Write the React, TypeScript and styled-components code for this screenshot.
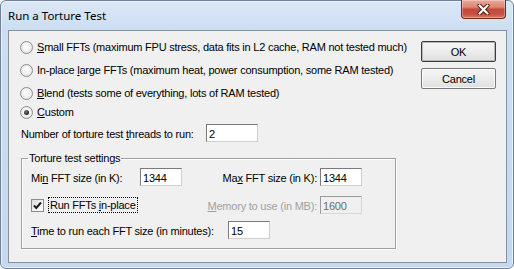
import React from "react";
import styled, { createGlobalStyle } from "styled-components";

const GlobalStyle = createGlobalStyle`
  html, body { margin: 0; padding: 0; }
  body { width: 514px; height: 269px; overflow: hidden; background: #ffffff; }
  * { box-sizing: border-box; }
`;

const UI_FONT = `"Liberation Sans", Arial, sans-serif`;

const Window = styled.div`
  width: 514px;
  height: 269px;
  display: flex;
  flex-direction: column;
  border: 1px solid #6f819a;
  border-radius: 6px;
  padding: 0 6px 5px 7px;
  background: linear-gradient(to bottom, #dbe7f5 0px, #cddef2 29px, #c4d8ef 100%);
  box-shadow: inset 0 0 0 1px #e9f1fb;
  font-family: ${UI_FONT};
  font-size: 11px;
  letter-spacing: -0.22px;
  line-height: 14px;
  color: #000;
`;

const TitleBar = styled.div`
  height: 29px;
  flex-shrink: 0;
  display: flex;
  align-items: flex-start;
  justify-content: space-between;
`;

const Title = styled.div`
  font-family: "Noto Sans", "Open Sans", sans-serif;
  font-size: 11.5px;
  letter-spacing: 0;
  line-height: 14px;
  padding-top: 8px;
  color: #000;
`;

const CloseButton = styled.div`
  width: 45px;
  height: 19px;
  margin-top: -1px;
  margin-right: 1px;
  display: flex;
  align-items: center;
  justify-content: center;
  border: 1px solid #6e2a1f;
  border-top: none;
  border-radius: 0 0 4px 4px;
  background: linear-gradient(
    to bottom,
    #e9a99a 0%,
    #d98773 40%,
    #c4493a 52%,
    #c65040 78%,
    #d97a62 100%
  );
  box-shadow: inset 0 0 0 1px rgba(255, 255, 255, 0.3);
`;

const Client = styled.div`
  flex: 1;
  display: flex;
  background: #f0f0f0;
  border: 1px solid #8591a3;
`;

const Options = styled.div`
  flex: 1;
  display: flex;
  flex-direction: column;
  padding: 7px 0 0 12px;
`;

const RadioRow = styled.div<{ $gap: number }>`
  height: 18px;
  margin-top: ${(p) => p.$gap}px;
  display: flex;
  align-items: center;
  white-space: nowrap;
`;

const RadioMark = styled.span<{ $checked?: boolean }>`
  width: 13px;
  height: 13px;
  margin-left: -1px;
  margin-right: 4px;
  flex-shrink: 0;
  border-radius: 50%;
  border: 1px solid #8b8c8c;
  background: radial-gradient(circle at 50% 45%, #ffffff 0%, #f3f3f3 45%, #d4d4d4 100%);
  display: flex;
  align-items: center;
  justify-content: center;
  &::after {
    content: "";
    width: 5px;
    height: 5px;
    border-radius: 50%;
    background: ${(p) =>
      p.$checked ? "radial-gradient(circle at 40% 35%, #7a7a7a 0%, #141414 80%)" : "transparent"};
  }
`;

const Key = styled.span`
  text-decoration: underline;
  text-underline-offset: 1px;
`;

const FieldRow = styled.div<{ $gap: number }>`
  height: 18px;
  margin-top: ${(p) => p.$gap}px;
  display: flex;
  align-items: center;
  white-space: nowrap;
`;

const Label = styled.span<{ $w: number; $right?: boolean; $disabled?: boolean }>`
  width: ${(p) => p.$w}px;
  flex-shrink: 0;
  padding-top: 2px;
  padding-right: ${(p) => (p.$right ? 3 : 0)}px;
  text-align: ${(p) => (p.$right ? "right" : "left")};
  color: ${(p) => (p.$disabled ? "#a0a0a0" : "#000")};
`;

const Field = styled.input<{ $w: number }>`
  width: ${(p) => p.$w}px;
  height: 18px;
  flex-shrink: 0;
  margin: 0;
  padding: 1px 2px 0;
  font: inherit;
  letter-spacing: inherit;
  color: #000;
  background: #ffffff;
  border: 1px solid;
  border-color: #7a7a7a #cfcfcf #cfcfcf #7a7a7a;
  outline: none;
  &:disabled {
    background: #f0f0f0;
    color: #6d6d6d;
    border-color: #9a9a9a #d6d6d6 #d6d6d6 #9a9a9a;
  }
`;

const Group = styled.fieldset`
  width: 375px;
  height: 98px;
  margin: 9px 0 0 0;
  padding: 0 9px;
  border: 1px solid #a0a0a0;
  box-shadow: inset 1px 1px 0 #ffffff, 1px 1px 0 #ffffff;
  display: flex;
  flex-direction: column;
`;

const GroupTitle = styled.legend`
  margin-left: -3px;
  padding: 0 1px;
  line-height: 15px;
`;

const CheckArea = styled.div`
  width: 151px;
  flex-shrink: 0;
  display: flex;
  align-items: center;
`;

const CheckBox = styled.span`
  width: 13px;
  height: 13px;
  margin-right: 4px;
  flex-shrink: 0;
  border: 1px solid #8b8c8c;
  background: linear-gradient(135deg, #dcdcdc 0%, #f6f6f6 60%, #ffffff 100%);
  display: flex;
  align-items: center;
  justify-content: center;
`;

const FocusLabel = styled.span`
  height: 16px;
  padding: 1px 1px 0;
  border: 1px dotted #000;
  line-height: 13px;
`;

const Buttons = styled.div`
  width: 75px;
  margin: 10px 10px 0 0;
  display: flex;
  flex-direction: column;
  gap: 6px;
`;

const Button = styled.button<{ $default?: boolean }>`
  width: 75px;
  height: 21px;
  margin: 0;
  padding: 0;
  font: inherit;
  letter-spacing: inherit;
  color: #000;
  border: 1px solid ${(p) => (p.$default ? "#3c3c3c" : "#7a7a7a")};
  border-radius: 2px;
  background: linear-gradient(to bottom, #f6f6f6 0%, #ececec 50%, #e0e0e0 100%);
  box-shadow: inset 0 0 0 1px ${(p) => (p.$default ? "#b8b8b8" : "#fbfbfb")};
`;

export default function App() {
  return (
    <>
      <GlobalStyle />
      <Window>
        <TitleBar>
          <Title>Run a Torture Test</Title>
          <CloseButton>
            <svg width="13" height="11" viewBox="0 0 13 11">
              <path d="M2.5 1.5 L10.5 9.5 M10.5 1.5 L2.5 9.5" stroke="#4f1a12" strokeWidth="4" strokeLinecap="round" fill="none" />
              <path d="M2.5 1.5 L10.5 9.5 M10.5 1.5 L2.5 9.5" stroke="#ffffff" strokeWidth="2.2" strokeLinecap="round" fill="none" />
            </svg>
          </CloseButton>
        </TitleBar>
        <Client>
          <Options>
            <RadioRow $gap={0}>
              <RadioMark />
              <span>
                <Key>S</Key>mall FFTs (maximum FPU stress, data fits in L2 cache, RAM not tested much)
              </span>
            </RadioRow>
            <RadioRow $gap={5}>
              <RadioMark />
              <span>
                In-place <Key>l</Key>arge FFTs (maximum heat, power consumption, some RAM tested)
              </span>
            </RadioRow>
            <RadioRow $gap={5}>
              <RadioMark />
              <span>
                <Key>B</Key>lend (tests some of everything, lots of RAM tested)
              </span>
            </RadioRow>
            <RadioRow $gap={1}>
              <RadioMark $checked />
              <span>
                <Key>C</Key>ustom
              </span>
            </RadioRow>
            <FieldRow $gap={3}>
              <Label $w={185}>
                Number of torture test <Key>t</Key>hreads to run:
              </Label>
              <Field $w={52} defaultValue="2" readOnly />
            </FieldRow>
            <Group>
              <GroupTitle>Torture test settings</GroupTitle>
              <FieldRow $gap={2}>
                <Label $w={109}>
                  Mi<Key>n</Key> FFT size (in K):
                </Label>
                <Field $w={42} defaultValue="1344" readOnly />
                <Label $w={138} $right>
                  Ma<Key>x</Key> FFT size (in K):
                </Label>
                <Field $w={42} defaultValue="1344" readOnly />
              </FieldRow>
              <FieldRow $gap={10}>
                <CheckArea>
                  <CheckBox>
                    <svg width="11" height="11" viewBox="0 0 11 11">
                      <path d="M2 5.5 L4.3 8 L9 2.5" stroke="#1e1e1e" strokeWidth="2" fill="none" />
                    </svg>
                  </CheckBox>
                  <FocusLabel>
                    Run FFTs <Key>i</Key>n-place
                  </FocusLabel>
                </CheckArea>
                <Label $w={138} $right $disabled>
                  <Key>M</Key>emory to use (in MB):
                </Label>
                <Field $w={42} defaultValue="1600" disabled />
              </FieldRow>
              <FieldRow $gap={7}>
                <Label $w={197}>
                  <Key>T</Key>ime to run each FFT size (in minutes):
                </Label>
                <Field $w={42} defaultValue="15" readOnly />
              </FieldRow>
            </Group>
          </Options>
          <Buttons>
            <Button $default>OK</Button>
            <Button>Cancel</Button>
          </Buttons>
        </Client>
      </Window>
    </>
  );
}
